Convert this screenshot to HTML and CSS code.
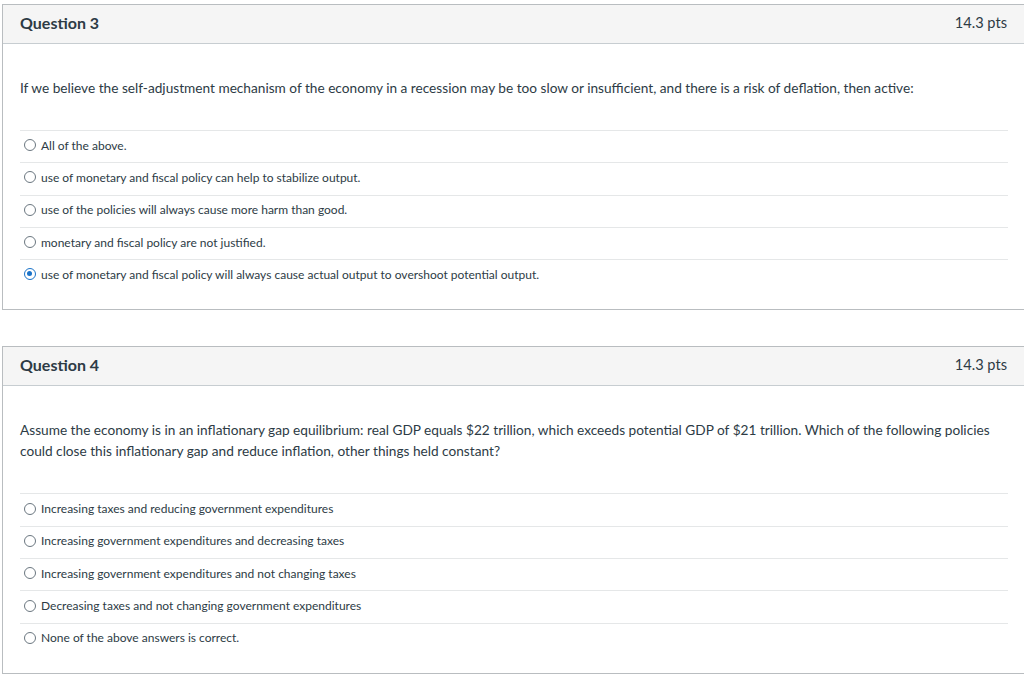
FILE: index.html
```html
<!DOCTYPE html>
<html>
<head>
<meta charset="utf-8">
<link rel="stylesheet" href="styles.css">
</head>
<body>
<div class="page">
  <div class="card">
    <div class="card-header">
      <span class="title">Question 3</span>
      <span class="pts">14.3 pts</span>
    </div>
    <div class="card-body">
      <p class="question">If we believe the self-adjustment mechanism of the economy in a recession may be too slow or insufficient, and there is a risk of deflation, then active:</p>
      <ul class="answers">
        <li class="answer"><span class="radio"></span><span>All of the above.</span></li>
        <li class="answer"><span class="radio"></span><span>use of monetary and fiscal policy can help to stabilize output.</span></li>
        <li class="answer"><span class="radio"></span><span>use of the policies will always cause more harm than good.</span></li>
        <li class="answer"><span class="radio"></span><span>monetary and fiscal policy are not justified.</span></li>
        <li class="answer"><span class="radio checked"></span><span>use of monetary and fiscal policy will always cause actual output to overshoot potential output.</span></li>
      </ul>
    </div>
  </div>
  <div class="card card-second">
    <div class="card-header">
      <span class="title">Question 4</span>
      <span class="pts">14.3 pts</span>
    </div>
    <div class="card-body">
      <p class="question">Assume the economy is in an inflationary gap equilibrium: real GDP equals $22 trillion, which exceeds potential GDP of $21 trillion. Which of the following policies could close this inflationary gap and reduce inflation, other things held constant?</p>
      <ul class="answers">
        <li class="answer"><span class="radio"></span><span>Increasing taxes and reducing government expenditures</span></li>
        <li class="answer"><span class="radio"></span><span>Increasing government expenditures and decreasing taxes</span></li>
        <li class="answer"><span class="radio"></span><span>Increasing government expenditures and not changing taxes</span></li>
        <li class="answer"><span class="radio"></span><span>Decreasing taxes and not changing government expenditures</span></li>
        <li class="answer"><span class="radio"></span><span>None of the above answers is correct.</span></li>
      </ul>
    </div>
  </div>
</div>
</body>
</html>
```

FILE: styles.css
```css
html, body {
  margin: 0;
  padding: 0;
  background: #ffffff;
}
body {
  font-family: Lato, "Liberation Sans", sans-serif;
  color: #2d3b45;
}
.page {
  padding: 4px 0 0 2px;
}
.card {
  border: 1px solid #b9bdc0;
  border-right: none;
  background: #fff;
}
.card-second {
  margin-top: 36px;
}
.card-header {
  box-sizing: border-box;
  height: 39px;
  background: #f5f5f5;
  border-bottom: 1px solid #c7cdd1;
  display: flex;
  align-items: center;
  justify-content: space-between;
  padding: 0 17px 4px 17px;
}
.title {
  font-size: 16px;
  font-weight: 700;
}
.pts {
  font-size: 14.6px;
}
.card-body {
  padding: 34px 16px 18px 17px;
}
.question {
  margin: 0 0 31px 0;
  font-size: 13.66px;
  line-height: 21px;
}
.answers {
  list-style: none;
  margin: 0;
  padding: 0;
}
.answer {
  box-sizing: border-box;
  display: flex;
  align-items: center;
  height: 32.3px;
  padding-bottom: 3px;
  border-top: 1px solid #e5e7e8;
  font-size: 12px;
}
.radio {
  box-sizing: border-box;
  width: 12px;
  height: 12px;
  border: 1.5px solid #6b7780;
  border-radius: 50%;
  margin: 0 5px 0 4px;
  flex: none;
  position: relative;
}
.radio.checked {
  border: 1.5px solid #1a73c9;
}
.radio.checked::after {
  content: "";
  position: absolute;
  left: 2px;
  top: 2px;
  width: 5px;
  height: 5px;
  border-radius: 50%;
  background: #1a73c9;
}
```
